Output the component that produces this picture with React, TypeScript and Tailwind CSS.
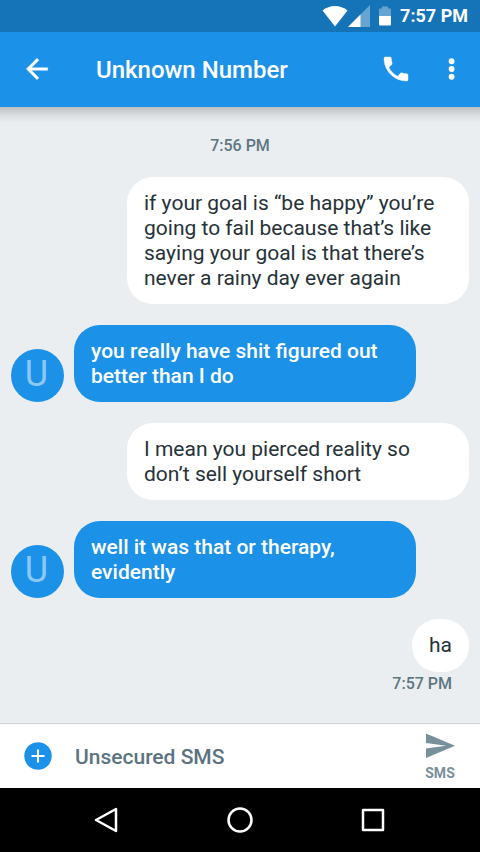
import React from "react";

type Message = { id: number; text: string; incoming: boolean; time?: string };

const messages: Message[] = [
  {
    id: 1,
    text: "if your goal is “be happy” you’re going to fail because that’s like saying your goal is that there’s never a rainy day ever again",
    incoming: false,
  },
  { id: 2, text: "you really have shit figured out better than I do", incoming: true },
  { id: 3, text: "I mean you pierced reality so don’t sell yourself short", incoming: false },
  { id: 4, text: "well it was that or therapy, evidently", incoming: true },
  { id: 5, text: "ha", incoming: false, time: "7:57 PM" },
];

function StatusBar() {
  return (
    <div className="flex h-8 items-center justify-end bg-[#1574b8] pr-3 text-white">
      <svg width="26" height="22" viewBox="0 0 26 22" aria-hidden="true">
        <path d="M0.5 5.5C7.5 -0.6 18.5 -0.6 25.5 5.5L13 21.5Z" fill="currentColor" />
      </svg>
      <svg width="22" height="22" viewBox="0 0 22 22" aria-hidden="true">
        <path d="M22 0V22H0Z" fill="currentColor" opacity="0.35" />
        <path d="M12.5 9.500V22H0Z" fill="currentColor" />
      </svg>
      <svg className="ml-2" width="14" height="20" viewBox="0 0 14 20" aria-hidden="true">
        <path d="M4 0.500H10V2.500H12Q13 2.500 13 3.500V11H1V3.500Q1 2.500 2 2.500H4Z" fill="currentColor" opacity="0.35" />
        <path d="M1 10H13V18.500Q13 19.500 12 19.500H2Q1 19.500 1 18.500Z" fill="currentColor" />
      </svg>
      <span className="ml-2 text-lg font-bold">7:57 PM</span>
    </div>
  );
}

function AppBar() {
  return (
    <header className="relative flex h-[75px] items-center bg-[#1b92e8] px-3 pb-0.5 text-white">
      <button type="button" aria-label="Back" className="flex h-12 w-[50px] items-center justify-center">
        <svg width="32" height="32" viewBox="0 0 24 24" fill="currentColor" aria-hidden="true">
          <path d="M20 11H7.830l5.590-5.590L12 4l-8 8 8 8 1.410-1.410L7.830 13H20v-2z" stroke="currentColor" strokeWidth="0.300" />
        </svg>
      </button>
      <h1 className="ml-[34px] flex-1 pt-0.5 text-2xl font-medium">Unknown Number</h1>
      <button type="button" aria-label="Call" className="flex h-12 w-12 items-center justify-center">
        <svg width="32" height="32" viewBox="0 0 24 24" fill="currentColor" aria-hidden="true">
          <path
            d="M6.620 10.790c1.440 2.830 3.760 5.140 6.590 6.590l2.200-2.200c.270-.270.670-.360 1.020-.240 1.120.370 2.330.570 3.570.570.550 0 1 .450 1 1V20c0 .550-.450 1-1 1-9.390 0-17-7.610-17-17 0-.550.450-1 1-1h3.500c.550 0 1 .450 1 1 0 1.250.200 2.450.570 3.570.110.350.030.740-.250 1.020l-2.200 2.200z"
            stroke="currentColor"
            strokeWidth="0.300"
          />
        </svg>
      </button>
      <button type="button" aria-label="More options" className="ml-4 flex h-12 w-8 items-center justify-center">
        <svg width="32" height="32" viewBox="0 0 24 24" fill="currentColor" aria-hidden="true">
          <circle cx="11.700" cy="6.200" r="2.200" />
          <circle cx="11.700" cy="12" r="2.200" />
          <circle cx="11.700" cy="17.800" r="2.200" />
        </svg>
      </button>
      <div className="pointer-events-none absolute inset-x-0 top-full h-4 bg-linear-to-b from-black/20 via-black/7 to-transparent" />
    </header>
  );
}

function MessageRow({ message }: { message: Message }) {
  if (message.incoming) {
    return (
      <li className="flex items-end gap-[10px]">
        <span className="flex h-[53px] w-[53px] shrink-0 items-center justify-center rounded-full bg-[#1b92e8] pr-0.5 pb-1 text-4xl text-[#8dc8f3]">
          U
        </span>
        <p className="max-w-[342px] rounded-[26px] bg-[#1b92e8] px-[17px] pt-[14px] pb-[13px] font-medium text-white">
          {message.text}
        </p>
      </li>
    );
  }
  return (
    <li className="flex flex-col items-end">
      <p className="min-h-[53px] max-w-[342px] rounded-[26px] bg-white px-[17px] pt-[14px] pb-[13px] text-[#263238]">
        {message.text}
      </p>
      {message.time && <time className="mr-[17px] text-base font-medium text-[#5d7682]">{message.time}</time>}
    </li>
  );
}

function Compose() {
  return (
    <form className="flex h-[65px] items-center border-t border-[#cfd4d7] bg-white pr-5 pl-[22px]">
      <button type="button" aria-label="Add attachment" className="flex h-8 w-8 shrink-0 items-center justify-center">
        <svg width="28" height="28" viewBox="0 0 28 28" aria-hidden="true">
          <circle cx="14" cy="14" r="13.800" fill="#1b92e8" />
          <path d="M14 7.500V20.500M7.500 14H20.500" stroke="white" strokeWidth="2" />
        </svg>
      </button>
      <input
        type="text"
        aria-label="Message"
        placeholder="Unsecured SMS"
        className="ml-[21px] min-w-0 flex-1 bg-transparent pt-1 text-[21px] font-medium text-[#263238] outline-none placeholder:text-[#5b7380]"
      />
      <button type="submit" className="flex w-10 flex-col items-center pt-1 text-[#78909c]">
        <svg width="30" height="26" viewBox="0 0 30 26" fill="currentColor" aria-hidden="true">
          <path d="M1 0.500L30 12.800L1 25V15.500L21 12.800L1 10Z" />
        </svg>
        <span className="mt-1 text-sm font-bold">SMS</span>
      </button>
    </form>
  );
}

function NavBar() {
  return (
    <nav className="flex h-16 items-center justify-center gap-[101px] bg-black text-white">
      <button type="button" aria-label="Back">
        <svg width="32" height="32" viewBox="0 0 32 32" fill="none" stroke="currentColor" strokeWidth="2.500" strokeLinejoin="round" aria-hidden="true">
          <path d="M25 5V27L5 16Z" />
        </svg>
      </button>
      <button type="button" aria-label="Home">
        <svg width="32" height="32" viewBox="0 0 32 32" fill="none" stroke="currentColor" strokeWidth="2.500" aria-hidden="true">
          <circle cx="16" cy="16" r="11.500" />
        </svg>
      </button>
      <button type="button" aria-label="Recent apps">
        <svg width="32" height="32" viewBox="0 0 32 32" fill="none" stroke="currentColor" strokeWidth="2.500" strokeLinejoin="round" aria-hidden="true">
          <rect x="6" y="6" width="20" height="20" />
        </svg>
      </button>
    </nav>
  );
}

export default function App() {
  return (
    <div className="flex min-h-screen flex-col bg-[#ebeef1] font-['Roboto',sans-serif]">
      <StatusBar />
      <AppBar />
      <main className="flex-1 px-[11px] pt-[27px] pb-6">
        <div className="text-center text-base font-medium text-[#5d7682]">
          <time>7:56 PM</time>
        </div>
        <ul className="mt-[19px] flex flex-col gap-[21px] text-[21px] leading-[25px]">
          {messages.map((message) => (
            <MessageRow key={message.id} message={message} />
          ))}
        </ul>
      </main>
      <Compose />
      <NavBar />
    </div>
  );
}
